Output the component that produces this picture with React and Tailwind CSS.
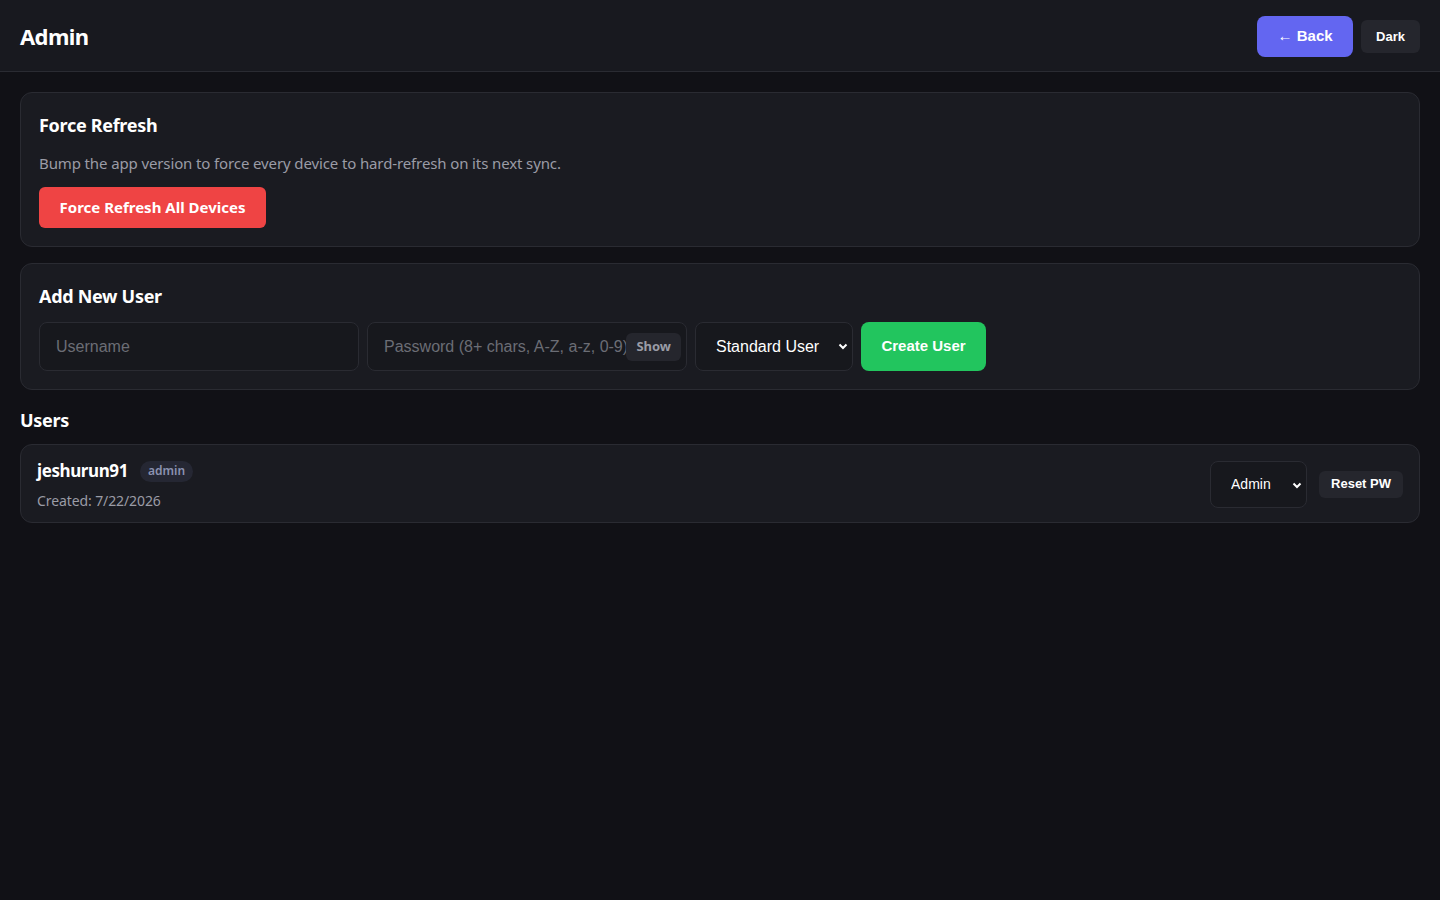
import React, { useState } from "react";

const sans = "font-['Noto_Sans','Open_Sans',sans-serif]";
const arial = "font-['Liberation_Sans',Arial,sans-serif]";

const Card = ({ children, className = "" }) => (
  <div
    className={`bg-[#1a1b21] border border-[#2a2b32] rounded-xl ${className}`}
  >
    {children}
  </div>
);

const Chevron = () => (
  <svg
    className="absolute right-[5px] top-[19px] w-[10px] h-[10px] pointer-events-none"
    viewBox="0 0 10 10"
    fill="none"
    stroke="white"
    strokeWidth="2"
  >
    <path d="M1.5 3.5 L5 7 L8.5 3.5" />
  </svg>
);

const App = () => {
  const [showPw, setShowPw] = useState(false);

  return (
    <div className={`min-h-screen bg-[#111116] text-white ${sans}`}>
      {/* Header */}
      <header className="h-[72px] flex items-center justify-between px-5 bg-[#18191f] border-b border-[#2a2b32]">
        <h1 className="text-[22px] font-bold tracking-[-0.6px] pt-[2px]">Admin</h1>
        <div className={`flex items-center gap-2 pt-[2px] ${arial}`}>
          <button className="h-[41px] w-[96px] rounded-lg bg-[#6366f1] text-[15px] font-bold text-white">
            ← Back
          </button>
          <button className="h-[33px] px-[15px] rounded-md bg-[#25262d] text-[13px] font-bold text-white">
            Dark
          </button>
        </div>
      </header>

      <main className="px-5 pt-5 flex flex-col gap-4">
        {/* Force refresh */}
        <Card className="px-[18px] pt-[20px] pb-[18px]">
          <h2 className="text-[18px] font-bold leading-6 tracking-[-0.3px]">
            Force Refresh
          </h2>
          <p className="mt-4 text-[15px] text-[#9a9ca6] leading-5 tracking-[-0.12px]">
            Bump the app version to force every device to hard-refresh on its
            next sync.
          </p>
          <button className="mt-[14px] h-[41px] w-[227px] rounded-md bg-[#ef4444] text-[15px] font-bold text-white tracking-[0px]">
            Force Refresh All Devices
          </button>
        </Card>

        {/* Add user */}
        <Card className="px-[18px] pt-[20px] pb-[18px]">
          <h2 className="text-[18px] font-bold leading-6 tracking-[-0.3px]">
            Add New User
          </h2>
          <div className={`mt-[14px] flex items-center gap-2 ${arial}`}>
            <input
              placeholder="Username"
              className="w-[320px] h-[49px] px-4 rounded-lg bg-[#17181d] border border-[#2a2b32] text-[16px] text-white placeholder:text-[#6b6d75] outline-none"
            />
            <div className="relative w-[320px] h-[49px]">
              <input
                type={showPw ? "text" : "password"}
                placeholder="Password (8+ chars, A-Z, a-z, 0-9)"
                className="w-full h-full pl-4 pr-14 rounded-lg bg-[#17181d] border border-[#2a2b32] text-[16px] text-white placeholder:text-[#6b6d75] outline-none"
              />
              <button
                onClick={() => setShowPw(!showPw)}
                className={`absolute right-[6px] top-[11px] h-[28px] px-[10px] rounded-md bg-[#25262d] text-[13px] font-bold text-[#9a9ca6] ${sans}`}
              >
                Show
              </button>
            </div>
            <div className="relative w-[158px] h-[49px]">
              <select className="appearance-none w-full h-full pl-5 pr-8 rounded-lg bg-[#17181d] border border-[#2a2b32] text-[16px] text-white outline-none">
                <option>Standard User</option>
                <option>Admin</option>
              </select>
              <Chevron />
            </div>
            <button className="w-[125px] h-[49px] rounded-lg bg-[#22c55e] text-[15px] font-bold text-white">
              Create User
            </button>
          </div>
        </Card>

        {/* Users */}
        <div>
          <h2 className="text-[18px] font-bold leading-6 mt-[2px] mb-[12px] tracking-[-0.3px]">
            Users
          </h2>
          <Card className="h-[79px] px-4 flex items-center justify-between">
            <div className="pt-[2px]">
              <div className="flex items-center gap-[12px]">
                <span className="text-[17px] font-bold tracking-[-0.4px]">
                  jeshurun91
                </span>
                <span className="px-2 h-[21px] flex items-center rounded-full bg-[#252733] text-[12px] font-semibold text-[#8b92b0]">
                  admin
                </span>
              </div>
              <div className="mt-[6px] text-[14px] text-[#9a9ca6] tracking-[-0.1px]">
                Created: 7/22/2026
              </div>
            </div>
            <div className={`flex items-center gap-3 pt-[1px] ${arial}`}>
              <div className="relative w-[97px] h-[47px]">
                <select className="appearance-none w-full h-full pl-5 pr-6 rounded-lg bg-[#17181d] border border-[#2a2b32] text-[14px] text-white outline-none">
                  <option>Admin</option>
                  <option>Standard User</option>
                </select>
                <Chevron />
              </div>
              <button className="h-[27px] px-3 rounded-md bg-[#25262d] text-[13px] font-bold text-white">
                Reset PW
              </button>
            </div>
          </Card>
        </div>
      </main>
    </div>
  );
};

export default App;
